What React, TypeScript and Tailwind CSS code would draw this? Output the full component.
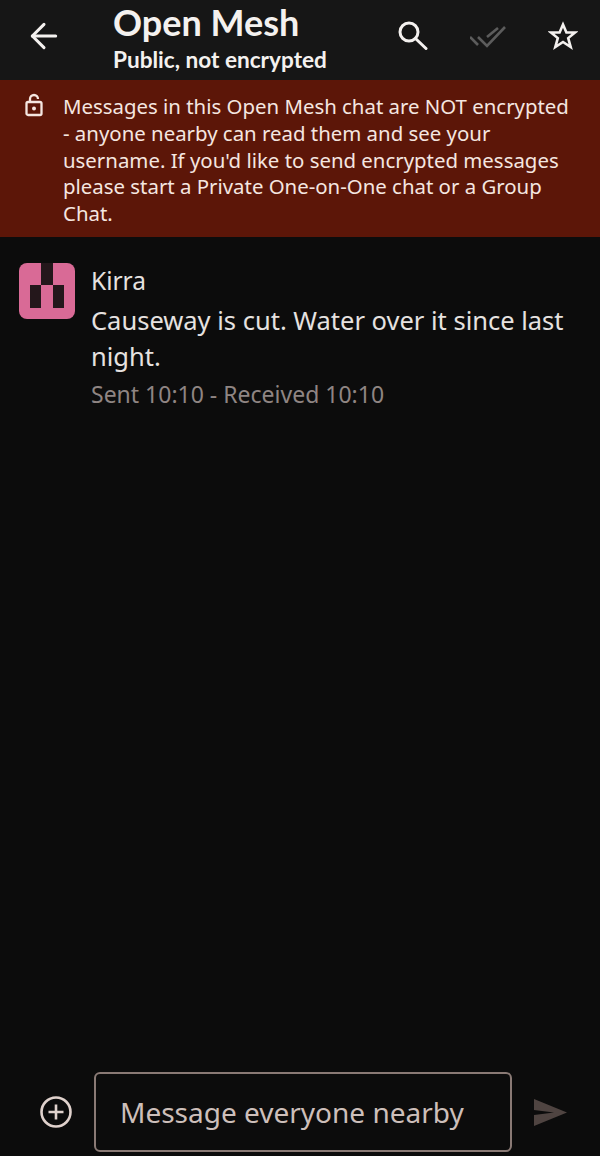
import { ArrowLeft } from 'lucide-react';

const body = "font-['Noto_Sans',sans-serif]";

function SearchGlyph() {
  return (
    <svg width="30" height="30" viewBox="0 0 30 30" fill="none" stroke="#f4f1ef" strokeWidth="3">
      <circle cx="11" cy="11" r="9" />
      <path d="M17.5 17.5L28 27.5" strokeLinecap="round" />
    </svg>
  );
}

function StarGlyph() {
  return (
    <svg width="30" height="30" viewBox="0 0 30 30" fill="none" stroke="#f4f1ef" strokeWidth="2.6" strokeLinejoin="miter">
      <path d="M15 3.5l3.4 8h8.6l-6.8 5.6 2.5 9-7.7-5.1-7.7 5.1 2.5-9L3 11.5h8.6z" />
    </svg>
  );
}

function DoubleCheck() {
  return (
    <svg width="36" height="24" viewBox="0 0 36 24" fill="none" stroke="#5c5c5c" strokeWidth="2.6">
      <path d="M0 12l8 8" />
      <path d="M8 12l9 9L35 2" />
      <path d="M17 12L28 3" />
    </svg>
  );
}

function LockBadge() {
  return (
    <svg width="18" height="24" viewBox="0 0 18 24" fill="none" stroke="#f5e6e0" strokeWidth="2.3">
      <rect x="1.5" y="9" width="15" height="13" rx="1.5" />
      <path d="M5 9V6a4 4 0 0 1 8 0" />
      <circle cx="9" cy="15.5" r="2" fill="#f5e6e0" stroke="none" />
    </svg>
  );
}

function Avatar() {
  return (
    <div className="grid h-[56px] w-[56px] shrink-0 grid-cols-5 grid-rows-5 overflow-hidden rounded-[8px] bg-[#d96a96]">
      <div />
      <div />
      <div className="bg-[#24171b]" />
      <div />
      <div />
      <div />
      <div />
      <div className="bg-[#24171b]" />
      <div />
      <div />
      <div />
      <div className="bg-[#24171b]" />
      <div />
      <div className="bg-[#24171b]" />
      <div />
      <div />
      <div className="bg-[#24171b]" />
      <div />
      <div className="bg-[#24171b]" />
      <div />
    </div>
  );
}

export default function App() {
  return (
    <div className={`flex h-[1156px] w-[600px] flex-col overflow-hidden bg-[#0c0c0c] ${body}`}>
      {/* Header */}
      <header className="flex h-[80px] shrink-0 items-center bg-[#161616] text-[#f4f1ef]">
        <div className="flex w-[113px] shrink-0 justify-start pb-[8px] pl-[24px]">
          <ArrowLeft className="h-[40px] w-[40px]" strokeWidth={1.8} />
        </div>
        <div className="flex-1 self-start pt-[4px] font-['Lato',sans-serif]">
          <h1 className="text-[36px] leading-[36px] font-bold">Open Mesh</h1>
          <p className="mt-[6px] text-[22.6px] leading-[28px] font-bold">Public, not encrypted</p>
        </div>
        <div className="flex items-center pr-[22px] pb-[8px]">
          <SearchGlyph />
          <div className="ml-[42px] pt-[2px]">
            <DoubleCheck />
          </div>
          <div className="ml-[42px]">
            <StarGlyph />
          </div>
        </div>
      </header>

      {/* Unencrypted warning */}
      <div className="flex h-[157px] shrink-0 bg-[#5c1608] pt-[13px] pl-[25px] text-[#f5e6e0]">
        <div className="w-[38px] shrink-0">
          <LockBadge />
        </div>
        <p className="text-[20.4px] leading-[26.8px]">
          Messages in this Open Mesh chat are NOT encrypted
          <br />- anyone nearby can read them and see your
          <br />
          username. If you'd like to send encrypted messages
          <br />
          please start a Private One-on-One chat or a Group
          <br />
          Chat.
        </p>
      </div>

      {/* Message list */}
      <main className="flex flex-1 gap-[16px] pt-[26px] pl-[19px]">
        <Avatar />
        <div>
          <p className="mb-[3px] text-[24.5px] leading-[36px] text-[#e6e2e0]">Kirra</p>
          <p className="text-[25.5px] leading-[36px] text-[#e6e2e0]">
            Causeway is cut. Water over it since last
            <br />
            night.
          </p>
          <p className="mt-[5px] text-[23px] leading-[30px] text-[#8f8583]">Sent 10:10 - Received 10:10</p>
        </div>
      </main>

      {/* Composer */}
      <footer className="flex h-[84px] shrink-0 items-start pb-[4px]">
        <div className="flex h-[80px] w-[94px] shrink-0 items-center pl-[39px]">
          <svg width="34" height="34" viewBox="0 0 34 34" fill="none" stroke="#e0d2cd" strokeWidth="2.6">
            <circle cx="17" cy="17" r="14.5" />
            <path d="M17 9.5v15M9.5 17h15" />
          </svg>
        </div>
        <div className="flex h-[80px] w-[418px] items-center rounded-[6px] border-2 border-[#8a7a75] pb-[1px] pl-[24px] text-[28px] text-[#cdbfba]">
          Message everyone nearby
        </div>
        <div className="flex h-[80px] flex-1 items-center pl-[22px]">
          <svg width="33" height="27" viewBox="0 0 33 27" fill="#4f4441">
            <path d="M0 0l33 13.5L0 27V16l20-2.5L0 11z" />
          </svg>
        </div>
      </footer>
    </div>
  );
}
